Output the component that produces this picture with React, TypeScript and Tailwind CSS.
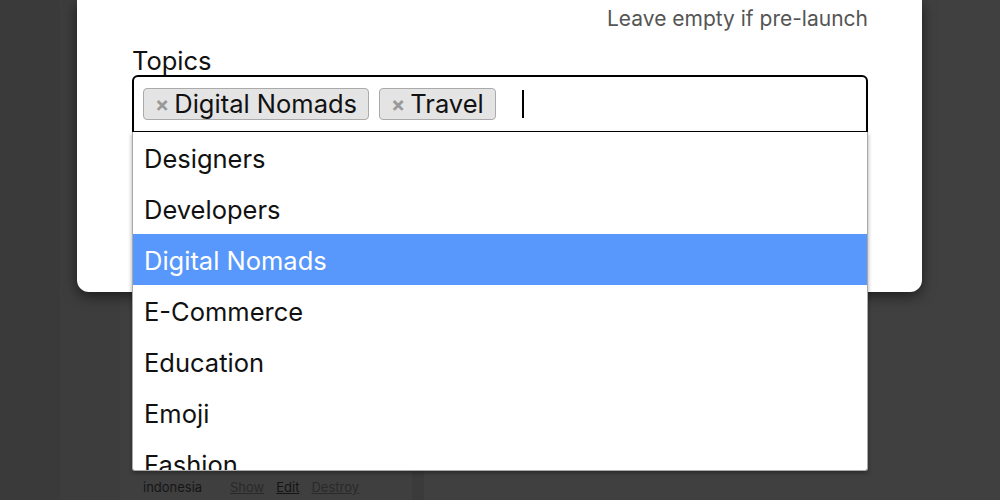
import React from "react";

const OPTIONS = ["Designers", "Developers", "Digital Nomads", "E-Commerce", "Education", "Emoji", "Fashion", "Finance"];
const SELECTED = ["Digital Nomads", "Travel"];

function Tag({ label }: { label: string }) {
  return (
    <span className="flex h-[32px] items-center rounded-[4px] border border-[#aaaaaa] bg-[#e4e4e4] pl-[11px] pr-[11px] text-[25.5px] leading-none text-[#111]">
      <span className="mr-[5px] text-[21px] font-bold text-[#999999]">×</span>
      {label}
    </span>
  );
}

export default function App() {
  const highlighted = "Digital Nomads";

  return (
    <div
      className="relative h-[500px] w-[1000px] overflow-hidden bg-[#404040]"
      style={{ fontFamily: "Inter, 'Noto Sans', sans-serif" }}
    >
      {/* page behind the overlay */}
      <div className="flex h-full">
        <div className="h-full w-[60px] bg-[#3a3a3a]" />
        <div className="h-full w-[60px] bg-[#3d3d3d]" />
        <div className="flex h-full w-[304px] flex-col justify-end border-r-[12px] border-[#3b3b3b] bg-[#3f3f3f]">
          <div className="flex items-center pb-[5px] pl-[23px] text-[13px] leading-[16px]">
            <span className="w-[87px] text-[#161616]">indonesia</span>
            <span className="mr-[12px] text-[#2a2a2a] underline">Show</span>
            <span className="mr-[12px] text-[#141414] underline">Edit</span>
            <span className="text-[#2a2a2a] underline">Destroy</span>
          </div>
        </div>
      </div>

      {/* modal */}
      <div className="absolute left-[77px] top-0 h-[292px] w-[845px] rounded-b-[12px] bg-white pl-[55px] pr-[54px] shadow-[0_4px_14px_rgba(0,0,0,0.55)]">
        <div className="pt-[6px] text-right text-[21px] leading-[26px] text-[#555555]">Leave empty if pre-launch</div>
        <div className="pt-[14px] text-[25.5px] leading-[29px] text-[#111]">Topics</div>

        <div className="relative">
          <div className="flex h-[57px] items-center gap-[10px] rounded-t-[6px] border-2 border-b border-black pl-[9px]">
            {SELECTED.map(s => (
              <Tag key={s} label={s} />
            ))}
            <span className="ml-[16px] h-[28px] w-[2px] bg-black" />
          </div>

          <div className="absolute left-0 top-full z-10 h-[339px] w-full overflow-hidden rounded-b-[3px] border border-t-0 border-[#aaaaaa] bg-white shadow-[0_2px_4px_rgba(0,0,0,0.35)]">
            {OPTIONS.map(o => (
              <div
                key={o}
                className={`flex h-[51px] items-center px-[11px] pt-[3px] text-[25.5px] ${o === highlighted ? "bg-[#5897fb] text-white" : "text-[#111]"}`}
              >
                {o}
              </div>
            ))}
          </div>
        </div>
      </div>
    </div>
  );
}
